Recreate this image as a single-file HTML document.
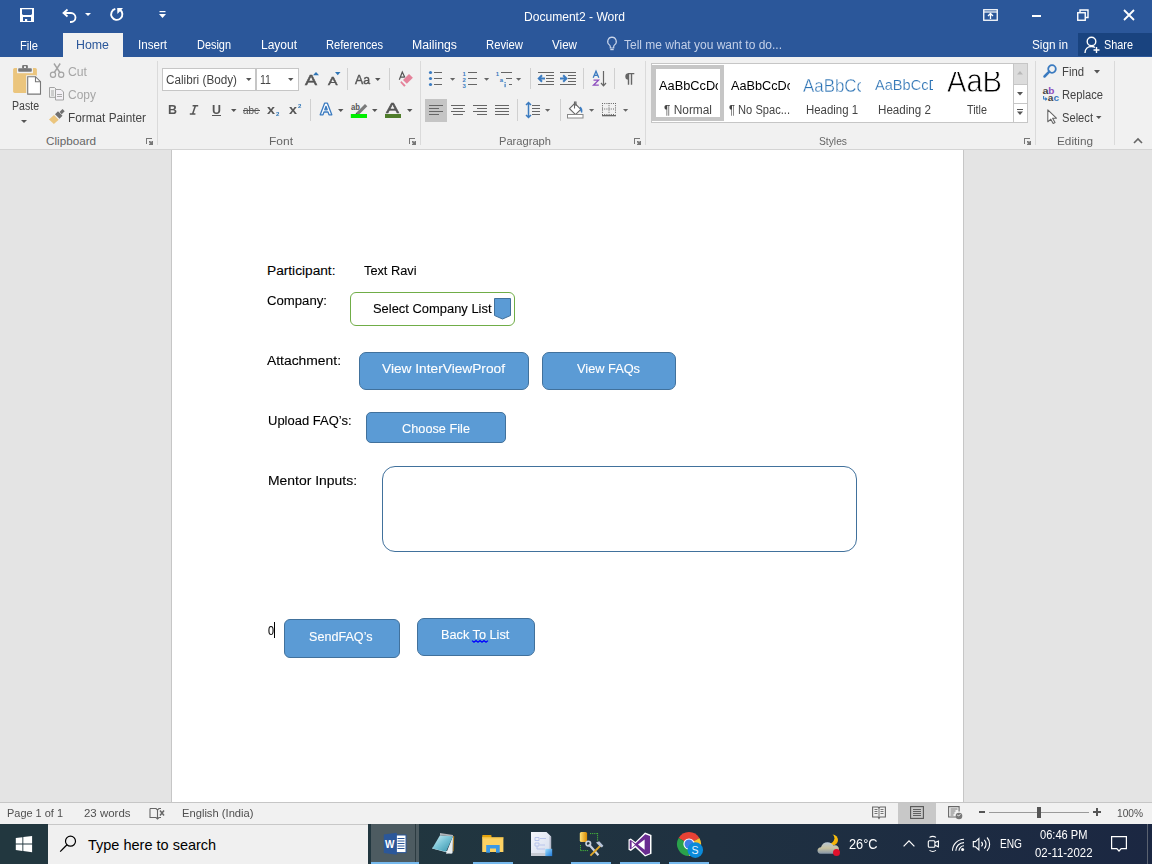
<!DOCTYPE html>
<html><head><meta charset="utf-8"><title>Document2 - Word</title>
<style>
html,body{margin:0;padding:0;width:1152px;height:864px;overflow:hidden;background:#e4e4e4;}
body{position:relative;font-family:"Liberation Sans",sans-serif;}
.t{position:absolute;white-space:nowrap;line-height:1;}
svg{overflow:visible;}
</style></head><body>
<div style="position:absolute;left:0px;top:0px;width:1152px;height:57px;background:#2b579a;"></div>
<div style="position:absolute;left:63px;top:33px;width:60px;height:24px;background:#f1f1f1;"></div>
<div style="position:absolute;left:1078px;top:33px;width:74px;height:23px;background:#19437f;"></div>
<svg style="position:absolute;left:0;top:0" width="1152" height="864"><path d="M20 8h14v14H20z M22 9.2v4.8l1 1h8l1-1V9.2z M23 17v4h2v-2h2.2v2H31v-4z" fill="#fff" fill-rule="evenodd"/></svg>
<svg style="position:absolute;left:61px;top:7px" width="18" height="16" viewBox="0 0 18 16"><path d="M3 6h7a4.5 4.5 0 0 1 0 9h-1" fill="none" stroke="#fff" stroke-width="1.8"/><path d="M6.5 2.5L2.5 6l4 3.5" fill="none" stroke="#fff" stroke-width="1.8"/></svg>
<svg style="position:absolute;left:85px;top:13px" width="7" height="4" viewBox="0 0 7 4"><path d="M0 0h6l-3 3z" fill="#fff"/></svg>
<svg style="position:absolute;left:0;top:0" width="1152" height="864"><path d="M115.3 8.9A5.6 5.6 0 1 0 119.8 9.6" fill="none" stroke="#fff" stroke-width="1.9"/><path d="M117.2 8h5.8l-2.2 2.4 -3.4 3.6z" fill="#fff"/></svg>
<svg style="position:absolute;left:159px;top:11px" width="7" height="8" viewBox="0 0 7 8"><rect x="0.5" y="0" width="6" height="1.2" fill="#fff"/><path d="M0 3h7l-3.5 4z" fill="#fff"/></svg>
<div class="t" style="left:524.00px;top:11.00px;font-size:12.6px;color:#fff;transform:scaleX(0.9578);transform-origin:0 0;">Document2 - Word</div>
<svg style="position:absolute;left:983px;top:9px" width="15" height="12" viewBox="0 0 15 12"><rect x="0.75" y="0.75" width="13.5" height="10.5" fill="none" stroke="#fff" stroke-width="1.3"/><path d="M1 3h13" stroke="#fff" stroke-width="1.2"/><path d="M7.5 10V5M5 7l2.5-2.5L10 7" fill="none" stroke="#fff" stroke-width="1.3"/></svg>
<div style="position:absolute;left:1032px;top:15px;width:9px;height:2px;background:#fff;"></div>
<svg style="position:absolute;left:1077px;top:9px" width="12" height="12" viewBox="0 0 12 12"><rect x="0.75" y="3.75" width="7.5" height="7.5" fill="none" stroke="#fff" stroke-width="1.4"/><path d="M3 3.5V1h8v7.5H8.5" fill="none" stroke="#fff" stroke-width="1.4"/></svg>
<svg style="position:absolute;left:1123px;top:9px" width="12" height="12" viewBox="0 0 12 12"><path d="M1 1l10 10M11 1L1 11" stroke="#fff" stroke-width="1.8"/></svg>
<div class="t" style="left:20.00px;top:40.00px;font-size:12.3px;color:#fff;transform:scaleX(0.9084);transform-origin:0 0;">File</div>
<div class="t" style="left:76.00px;top:39.00px;font-size:12.3px;color:#2b579a;transform:scaleX(1.0060);transform-origin:0 0;">Home</div>
<div class="t" style="left:138.00px;top:39.00px;font-size:12.3px;color:#fff;transform:scaleX(0.9430);transform-origin:0 0;">Insert</div>
<div class="t" style="left:197.00px;top:39.00px;font-size:12.3px;color:#fff;transform:scaleX(0.8882);transform-origin:0 0;">Design</div>
<div class="t" style="left:261.00px;top:39.00px;font-size:12.3px;color:#fff;transform:scaleX(0.9751);transform-origin:0 0;">Layout</div>
<div class="t" style="left:326.00px;top:39.00px;font-size:12.3px;color:#fff;transform:scaleX(0.9064);transform-origin:0 0;">References</div>
<div class="t" style="left:412.00px;top:39.00px;font-size:12.3px;color:#fff;transform:scaleX(0.9977);transform-origin:0 0;">Mailings</div>
<div class="t" style="left:486.00px;top:39.00px;font-size:12.3px;color:#fff;transform:scaleX(0.9177);transform-origin:0 0;">Review</div>
<div class="t" style="left:552.00px;top:39.00px;font-size:12.3px;color:#fff;transform:scaleX(0.9459);transform-origin:0 0;">View</div>
<svg style="position:absolute;left:606px;top:36px" width="12" height="16" viewBox="0 0 12 16"><path d="M6 1.2a4.3 4.3 0 0 0-2.6 7.7c.6.5.9 1.2.9 1.9V12h3.4v-1.2c0-.7.3-1.4.9-1.9A4.3 4.3 0 0 0 6 1.2z" fill="none" stroke="#c9d5ea" stroke-width="1.2"/><path d="M4.3 13.6h3.4" stroke="#c9d5ea" stroke-width="1.2"/></svg>
<div class="t" style="left:624.00px;top:39.00px;font-size:12.3px;color:#c3d0e8;transform:scaleX(0.9754);transform-origin:0 0;">Tell me what you want to do...</div>
<div class="t" style="left:1032.00px;top:39.00px;font-size:12.3px;color:#fff;transform:scaleX(0.9575);transform-origin:0 0;">Sign in</div>
<svg style="position:absolute;left:1084px;top:36px" width="17" height="18" viewBox="0 0 17 18"><circle cx="7.5" cy="5.5" r="4.3" fill="none" stroke="#fff" stroke-width="1.4"/><path d="M1 17c0-4 2.8-6.5 6.5-6.5 1.4 0 2.6.4 3.5 1" fill="none" stroke="#fff" stroke-width="1.4"/><path d="M12.5 11v6M9.5 14h6" stroke="#fff" stroke-width="1.4"/></svg>
<div class="t" style="left:1104.00px;top:39.00px;font-size:12.3px;color:#fff;transform:scaleX(0.8838);transform-origin:0 0;">Share</div>
<div style="position:absolute;left:0px;top:57px;width:1152px;height:92px;background:#f1f1f1;"></div>
<div style="position:absolute;left:0px;top:149px;width:1152px;height:1px;background:#d4d4d4;"></div>
<div style="position:absolute;left:157px;top:61px;width:1px;height:84px;background:#dadada;"></div>
<div style="position:absolute;left:420px;top:61px;width:1px;height:84px;background:#dadada;"></div>
<div style="position:absolute;left:645px;top:61px;width:1px;height:84px;background:#dadada;"></div>
<div style="position:absolute;left:1035px;top:61px;width:1px;height:84px;background:#dadada;"></div>
<div style="position:absolute;left:1114px;top:61px;width:1px;height:84px;background:#dadada;"></div>
<svg style="position:absolute;left:0;top:0" width="1152" height="864"><rect x="13.1" y="67.9" width="23.8" height="25" rx="1.6" fill="#ebc57d"/><rect x="17" y="67.5" width="16" height="5.7" fill="#f1f1f1"/><rect x="18.2" y="68.2" width="13.6" height="3.5" rx="0.8" fill="#777"/><rect x="22.1" y="65.1" width="5.8" height="3.6" rx="1" fill="#777"/><rect x="24" y="66.3" width="2" height="1.6" fill="#fff"/><path d="M27.7 76.7h7.8l5 5v12.4H27.7z" fill="#fff" stroke="#f1f1f1" stroke-width="3"/><path d="M27.7 76.7h7.8l5 5v12.4H27.7z" fill="#fff" stroke="#787878" stroke-width="1.1"/><path d="M35.5 76.7v5h5" fill="none" stroke="#787878" stroke-width="1.1"/></svg>
<div class="t" style="left:12.00px;top:100.00px;font-size:12.3px;color:#444444;transform:scaleX(0.8586);transform-origin:0 0;">Paste</div>
<svg style="position:absolute;left:21px;top:120px" width="7" height="4" viewBox="0 0 7 4"><path d="M0 0h6l-3 3z" fill="#555"/></svg>
<svg style="position:absolute;left:0;top:0" width="1152" height="864"><circle cx="53" cy="74.8" r="2.6" fill="none" stroke="#a3a3a3" stroke-width="1.2"/><circle cx="61.2" cy="74.8" r="2.6" fill="none" stroke="#a3a3a3" stroke-width="1.2"/><path d="M54.3 72.5L60.2 63.5M59.9 72.5L54 63.5" stroke="#a3a3a3" stroke-width="1.4"/></svg>
<div class="t" style="left:68.00px;top:66.00px;font-size:12.3px;color:#a6a6a6;transform:scaleX(0.9929);transform-origin:0 0;">Cut</div>
<svg style="position:absolute;left:0;top:0" width="1152" height="864"><path d="M49.5 87.5h5l1.5 1.5v8.3h-6.5z" fill="none" stroke="#a3a3a3" stroke-width="1"/><path d="M55.5 89.5h5.5l2.5 2.5v8H55.5z" fill="#f4f1f6" stroke="#a3a3a3" stroke-width="1"/><path d="M51 91h3M51 93h3M51 95h3M57 94.5h5M57 96.5h5" stroke="#a3a3a3" stroke-width="0.9"/></svg>
<div class="t" style="left:68.00px;top:89.00px;font-size:12.3px;color:#a6a6a6;transform:scaleX(0.9754);transform-origin:0 0;">Copy</div>
<svg style="position:absolute;left:0;top:0" width="1152" height="864"><path d="M49 119.5l5-4.5 4.7 4.7-4.8 4.3z" fill="#ebc57d"/><path d="M55 114.2l3-3 4.5 4.5-3 3z" fill="#707070"/><path d="M59.5 112l3-3 2.2 2.2-3 3z" fill="#707070"/></svg>
<div class="t" style="left:68.00px;top:112.00px;font-size:12.3px;color:#444444;transform:scaleX(0.9591);transform-origin:0 0;">Format Painter</div>
<div class="t" style="left:46.00px;top:135.00px;font-size:11.7px;color:#666666;">Clipboard</div>
<svg style="position:absolute;left:0;top:0" width="1152" height="864"><path d="M146 138h6v1h-5v5h-1z" fill="#777"/><path d="M149 141h1.2l1.3 1.3V141h1.5v4h-4v-1.3h1.3L149 142.3z" fill="#777"/></svg>
<div style="position:absolute;left:162px;top:68px;width:94px;height:23px;background:#fff;box-sizing:border-box;border:1px solid #c6c6c6"></div>
<div style="position:absolute;left:256px;top:68px;width:43px;height:23px;background:#fff;box-sizing:border-box;border:1px solid #c6c6c6"></div>
<div class="t" style="left:166.00px;top:74.00px;font-size:12.3px;color:#444444;transform:scaleX(0.9532);transform-origin:0 0;">Calibri (Body)</div>
<svg style="position:absolute;left:246px;top:78px" width="6" height="4" viewBox="0 0 6 4"><path d="M0 0h5.5l-2.75 3z" fill="#555"/></svg>
<div class="t" style="left:260.00px;top:74.00px;font-size:12.3px;color:#444444;transform:scaleX(0.8617);transform-origin:0 0;">11</div>
<svg style="position:absolute;left:288px;top:78px" width="6" height="4" viewBox="0 0 6 4"><path d="M0 0h5.5l-2.75 3z" fill="#555"/></svg>
<div class="t" style="left:305.00px;top:73.00px;font-size:14.5px;color:#555;transform:scaleX(1.2408);transform-origin:0 0;-webkit-text-stroke:0.5px #555;">A</div>
<svg style="position:absolute;left:313px;top:72px" width="6" height="4" viewBox="0 0 6 4"><path d="M0 3.2L3 0l3 3.2z" fill="#2e75b6"/></svg>
<div class="t" style="left:328.00px;top:76.00px;font-size:11.5px;color:#555;transform:scaleX(1.2385);transform-origin:0 0;-webkit-text-stroke:0.45px #555;">A</div>
<svg style="position:absolute;left:335px;top:72px" width="6" height="4" viewBox="0 0 6 4"><path d="M0 0h5.5L2.75 3.2z" fill="#2e75b6"/></svg>
<div style="position:absolute;left:347px;top:68px;width:1px;height:22px;background:#d0d0d0;"></div>
<div class="t" style="left:355.00px;top:73.00px;font-size:13.5px;color:#555;transform:scaleX(0.9084);transform-origin:0 0;-webkit-text-stroke:0.45px #555;">Aa</div>
<svg style="position:absolute;left:375px;top:78px" width="6" height="4" viewBox="0 0 6 4"><path d="M0 0h5.5l-2.75 3z" fill="#555"/></svg>
<div style="position:absolute;left:389px;top:68px;width:1px;height:22px;background:#d0d0d0;"></div>
<svg style="position:absolute;left:0;top:0" width="1152" height="864"><path d="M399.3 79.8l3-7.8 2.6 5.4M400.8 77.2h3.4" fill="none" stroke="#555" stroke-width="1.2"/><path d="M409 74l3.9 3.7-6.1 6.1-3.8-3.9z" fill="#e5829a"/><path d="M401.3 81l4.4 4.6-1.5 1.2-3.9-4.2z" fill="#e5829a"/></svg>
<div class="t" style="left:168.00px;top:104.00px;font-size:12.5px;color:#555;font-weight:700;transform:scaleX(0.9970);transform-origin:0 0;">B</div>
<svg style="position:absolute;left:0;top:0" width="1152" height="864"><path d="M192.6 105.7h5.6M189.8 113.9h5.6M195.4 105.7l-2.8 8.2" fill="none" stroke="#555" stroke-width="1.5"/></svg>
<div class="t" style="left:212.00px;top:104.00px;font-size:12.5px;color:#555;font-weight:700;transform:scaleX(0.9970);transform-origin:0 0;">U</div>
<div style="position:absolute;left:212px;top:115px;width:9px;height:1px;background:#555;"></div>
<svg style="position:absolute;left:231px;top:109px" width="6" height="4" viewBox="0 0 6 4"><path d="M0 0h5.5l-2.75 3z" fill="#555"/></svg>
<div class="t" style="left:243.00px;top:105.00px;font-size:11px;color:#555;transform:scaleX(0.9022);transform-origin:0 0;">abc</div>
<div style="position:absolute;left:243px;top:110px;width:17px;height:1px;background:#555;"></div>
<div class="t" style="left:267.00px;top:103.00px;font-size:13px;color:#555;font-weight:700;transform:scaleX(1.1065);transform-origin:0 0;">x</div>
<div class="t" style="left:275.80px;top:111.00px;font-size:6px;color:#2e75b6;font-weight:700;transform:scaleX(1.0189);transform-origin:0 0;">2</div>
<div class="t" style="left:289.00px;top:103.00px;font-size:13px;color:#555;font-weight:700;transform:scaleX(1.1065);transform-origin:0 0;">x</div>
<div class="t" style="left:298.00px;top:103.00px;font-size:6px;color:#2e75b6;font-weight:700;transform:scaleX(1.0189);transform-origin:0 0;">2</div>
<div style="position:absolute;left:310px;top:99px;width:1px;height:22px;background:#d0d0d0;"></div>
<svg style="position:absolute;left:319px;top:102px" width="14" height="14" viewBox="0 0 14 14"><path d="M1.2 12.8L5.6 1.2h2.8l4.4 11.6H10l-1-2.8H5l-1 2.8zM5.8 7.8h2.4L7 4.3z" fill="#fff" stroke="#3b7bc0" stroke-width="1.3" stroke-linejoin="round"/></svg>
<svg style="position:absolute;left:338px;top:109px" width="6" height="4" viewBox="0 0 6 4"><path d="M0 0h5.5l-2.75 3z" fill="#555"/></svg>
<svg style="position:absolute;left:0;top:0" width="1152" height="864"><text x="351" y="109.5" font-family="Liberation Sans" font-weight="700" font-size="9" fill="#555" textLength="9" lengthAdjust="spacingAndGlyphs">ab</text><path d="M356.5 112.5l8.5-8.5 2.3 2.3-8.5 8.5z" fill="#7a7a7a"/><path d="M355.6 113.4l1-1 2.3 2.3-2.2.6z" fill="#555"/><rect x="350.8" y="114" width="16.2" height="4" fill="#00ee00"/></svg>
<svg style="position:absolute;left:372px;top:109px" width="6" height="4" viewBox="0 0 6 4"><path d="M0 0h5.5l-2.75 3z" fill="#555"/></svg>
<div class="t" style="left:386.00px;top:101.00px;font-size:14px;color:#555;transform:scaleX(1.3922);transform-origin:0 0;-webkit-text-stroke:0.5px #555;">A</div>
<div style="position:absolute;left:385px;top:114px;width:16px;height:4px;background:#4f7d2b;"></div>
<svg style="position:absolute;left:407px;top:109px" width="6" height="4" viewBox="0 0 6 4"><path d="M0 0h5.5l-2.75 3z" fill="#555"/></svg>
<div class="t" style="left:269.00px;top:135.00px;font-size:11.7px;color:#666666;transform:scaleX(1.0262);transform-origin:0 0;">Font</div>
<svg style="position:absolute;left:0;top:0" width="1152" height="864"><path d="M409 138h6v1h-5v5h-1z" fill="#777"/><path d="M412 141h1.2l1.3 1.3V141h1.5v4h-4v-1.3h1.3L412 142.3z" fill="#777"/></svg>
<svg style="position:absolute;left:0;top:0" width="1152" height="864"><circle cx="430.5" cy="72.5" r="1.6" fill="#3b7bc0"/><rect x="434" y="72" width="8" height="1" fill="#666666"/><circle cx="430.5" cy="78.5" r="1.6" fill="#3b7bc0"/><rect x="434" y="78" width="8" height="1" fill="#666666"/><circle cx="430.5" cy="84.5" r="1.6" fill="#3b7bc0"/><rect x="434" y="84" width="8" height="1" fill="#666666"/><path d="M450 78h5.2l-2.6 2.8z" fill="#666"/><text x="462.6" y="75.5" font-family="Liberation Sans" font-weight="700" font-size="6" fill="#3b7bc0">1</text><rect x="468" y="72" width="9" height="1" fill="#666666"/><text x="462.6" y="81.5" font-family="Liberation Sans" font-weight="700" font-size="6" fill="#3b7bc0">2</text><rect x="468" y="78" width="9" height="1" fill="#666666"/><text x="462.6" y="87.5" font-family="Liberation Sans" font-weight="700" font-size="6" fill="#3b7bc0">3</text><rect x="468" y="84" width="9" height="1" fill="#666666"/><path d="M484 78h5.2l-2.6 2.8z" fill="#666"/><text x="495.8" y="75.5" font-family="Liberation Sans" font-weight="700" font-size="6" fill="#3b7bc0">1</text><rect x="501" y="72" width="11" height="1" fill="#666666"/><text x="499.8" y="81.5" font-family="Liberation Sans" font-weight="700" font-size="6" fill="#3b7bc0">a</text><rect x="506" y="78" width="6" height="1" fill="#666666"/><rect x="504.5" y="82" width="1.2" height="1" fill="#3b7bc0"/><rect x="504.5" y="83.8" width="1.2" height="3.4" fill="#3b7bc0"/><rect x="509" y="84" width="3" height="1" fill="#666666"/><path d="M516 78h5.2l-2.6 2.8z" fill="#666"/><rect x="538" y="72" width="16" height="1" fill="#666666"/><rect x="546" y="75" width="8" height="1" fill="#666666"/><rect x="546" y="78" width="8" height="1" fill="#666666"/><rect x="546" y="81" width="8" height="1" fill="#666666"/><rect x="538" y="84" width="16" height="1" fill="#666666"/><path d="M539 78.5h6M542 75.3l-3.2 3.2 3.2 3.2" fill="none" stroke="#3b7bc0" stroke-width="2"/><rect x="560" y="72" width="16" height="1" fill="#666666"/><rect x="568" y="75" width="8" height="1" fill="#666666"/><rect x="568" y="78" width="8" height="1" fill="#666666"/><rect x="568" y="81" width="8" height="1" fill="#666666"/><rect x="560" y="84" width="16" height="1" fill="#666666"/><path d="M560 78.5h6M563.2 75.3l3.2 3.2-3.2 3.2" fill="none" stroke="#3b7bc0" stroke-width="2"/><path d="M593.2 77.8l2.8-6.6 2.8 6.6M594.3 75.3h3.4" fill="none" stroke="#3b7bc0" stroke-width="1.3"/><path d="M593.5 80.2h5L593.5 85.2h5.3" fill="none" stroke="#8e4fbf" stroke-width="1.3"/><path d="M603.5 71v14.5M601 83l2.5 2.8 2.5-2.8" fill="none" stroke="#666" stroke-width="1.2"/><path d="M628.5 84.7V73.6h5.8M631.5 73.6v11.1" fill="none" stroke="#666" stroke-width="1.4"/><path d="M628.5 73.3a3.2 3.2 0 0 0 0 6.4z" fill="#666"/><rect x="425" y="99" width="22" height="23" fill="#c5c5c5"/><rect x="429" y="105" width="14" height="1" fill="#666666"/><rect x="451" y="105" width="14" height="1" fill="#666666"/><rect x="473" y="105" width="14" height="1" fill="#666666"/><rect x="495" y="105" width="14" height="1" fill="#666666"/><rect x="429" y="108" width="10" height="1" fill="#666666"/><rect x="453" y="108" width="10" height="1" fill="#666666"/><rect x="477" y="108" width="10" height="1" fill="#666666"/><rect x="495" y="108" width="14" height="1" fill="#666666"/><rect x="429" y="111" width="14" height="1" fill="#666666"/><rect x="451" y="111" width="14" height="1" fill="#666666"/><rect x="473" y="111" width="14" height="1" fill="#666666"/><rect x="495" y="111" width="14" height="1" fill="#666666"/><rect x="429" y="114" width="10" height="1" fill="#666666"/><rect x="453" y="114" width="10" height="1" fill="#666666"/><rect x="477" y="114" width="10" height="1" fill="#666666"/><rect x="495" y="114" width="14" height="1" fill="#666666"/><path d="M528.5 102.8v14.4M526 105l2.5-2.5 2.5 2.5M526 115l2.5 2.5 2.5-2.5" fill="none" stroke="#3b7bc0" stroke-width="1.5"/><rect x="532" y="105" width="8" height="1" fill="#666666"/><rect x="532" y="108" width="8" height="1" fill="#666666"/><rect x="532" y="111" width="8" height="1" fill="#666666"/><rect x="532" y="114" width="8" height="1" fill="#666666"/><path d="M545 109h5.2l-2.6 2.8z" fill="#666"/><path d="M569.5 108.7l5.3-5.3 6 6-5.3 5.2z" fill="#fff" stroke="#666" stroke-width="1.1"/><path d="M574.5 108.5v-6.5h1.5v4" fill="none" stroke="#666" stroke-width="1.1"/><path d="M580 106.5c2.2 1 3 3.3 2 6.8-1.5-1.5-2.5-3.5-2-6.8z" fill="#3b7bc0"/><rect x="567.5" y="114.5" width="15.5" height="3.5" fill="#fff" stroke="#888" stroke-width="1"/><path d="M589 109h5.2l-2.6 2.8z" fill="#666"/><path d="M602 103.5h13.5" stroke="#666" stroke-width="1" stroke-dasharray="1 1.2"/><path d="M602 109.0h13.5" stroke="#666" stroke-width="1" stroke-dasharray="1 1.2"/><path d="M602 114.5h13.5" stroke="#666" stroke-width="1" stroke-dasharray="1 1.2"/><path d="M602.5 103v11" stroke="#666" stroke-width="1" stroke-dasharray="1 1.2"/><path d="M609.0 103v11" stroke="#666" stroke-width="1" stroke-dasharray="1 1.2"/><path d="M615.5 103v11" stroke="#666" stroke-width="1" stroke-dasharray="1 1.2"/><rect x="602" y="115" width="14" height="1.3" fill="#666"/><path d="M623 109h5.2l-2.6 2.8z" fill="#666"/></svg>
<div style="position:absolute;left:530px;top:68px;width:1px;height:21px;background:#d0d0d0;"></div>
<div style="position:absolute;left:583px;top:68px;width:1px;height:21px;background:#d0d0d0;"></div>
<div style="position:absolute;left:614px;top:68px;width:1px;height:21px;background:#d0d0d0;"></div>
<div style="position:absolute;left:517px;top:99px;width:1px;height:22px;background:#d0d0d0;"></div>
<div style="position:absolute;left:560px;top:99px;width:1px;height:22px;background:#d0d0d0;"></div>
<div class="t" style="left:499.00px;top:135.00px;font-size:11.7px;color:#666666;transform:scaleX(0.9527);transform-origin:0 0;">Paragraph</div>
<svg style="position:absolute;left:0;top:0" width="1152" height="864"><path d="M634 138h6v1h-5v5h-1z" fill="#777"/><path d="M637 141h1.2l1.3 1.3V141h1.5v4h-4v-1.3h1.3L637 142.3z" fill="#777"/></svg>
<div style="position:absolute;left:651px;top:63px;width:377px;height:60px;background:#fff;box-sizing:border-box;border:1px solid #c6c6c6"></div>
<div style="position:absolute;left:652px;top:65px;width:72px;height:56px;background:#fff;box-sizing:border-box;border:4px solid #c6c6c6"></div>
<div style="position:absolute;left:1013px;top:64px;width:14px;height:20px;background:#dcdcdc;"></div>
<div style="position:absolute;left:1013px;top:84px;width:14px;height:1px;background:#c6c6c6;"></div>
<div style="position:absolute;left:1013px;top:103px;width:14px;height:1px;background:#c6c6c6;"></div>
<div style="position:absolute;left:1013px;top:64px;width:1px;height:58px;background:#c6c6c6;"></div>
<svg style="position:absolute;left:1017px;top:71px" width="7" height="4" viewBox="0 0 7 4"><path d="M0 3.5L3 0l3 3.5z" fill="#b8b8b8"/></svg>
<svg style="position:absolute;left:1017px;top:92px" width="7" height="4" viewBox="0 0 7 4"><path d="M0 0h6L3 3.5z" fill="#555"/></svg>
<svg style="position:absolute;left:1017px;top:109px" width="7" height="7" viewBox="0 0 7 7"><rect x="0" y="0" width="6" height="1" fill="#555"/><path d="M0 2.5h6L3 6z" fill="#555"/></svg>
<div style="position:absolute;left:659.00px;top:73.00px;width:58.50px;height:21.3px;overflow:hidden"><div class="t" style="left:0;top:6px;font-size:13.3px;color:#000;transform:scaleX(0.9611);transform-origin:0 0;">AaBbCcDc</div></div>
<div class="t" style="left:664.00px;top:104.00px;font-size:12.3px;color:#444444;transform:scaleX(0.9668);transform-origin:0 0;">¶ Normal</div>
<div style="position:absolute;left:731.00px;top:73.00px;width:58.50px;height:21.3px;overflow:hidden"><div class="t" style="left:0;top:6px;font-size:13.3px;color:#000;transform:scaleX(0.9534);transform-origin:0 0;">AaBbCcDc</div></div>
<div class="t" style="left:729.00px;top:104.00px;font-size:12.3px;color:#444444;transform:scaleX(0.9046);transform-origin:0 0;">¶ No Spac...</div>
<div style="position:absolute;left:803.00px;top:72.00px;width:58.00px;height:28.0px;overflow:hidden"><div class="t" style="left:0;top:6px;font-size:17.5px;color:#2e74b5;transform:scaleX(0.9658);transform-origin:0 0;-webkit-text-stroke:0.35px #fff;">AaBbCc</div></div>
<div class="t" style="left:806.00px;top:104.00px;font-size:12.3px;color:#444444;transform:scaleX(0.9275);transform-origin:0 0;">Heading 1</div>
<div style="position:absolute;left:875.00px;top:72.00px;width:58.00px;height:23.2px;overflow:hidden"><div class="t" style="left:0;top:6px;font-size:14.5px;color:#2e74b5;transform:scaleX(1.0053);transform-origin:0 0;-webkit-text-stroke:0.2px #fff;">AaBbCcD</div></div>
<div class="t" style="left:878.00px;top:104.00px;font-size:12.3px;color:#444444;transform:scaleX(0.9454);transform-origin:0 0;">Heading 2</div>
<div class="t" style="left:947.00px;top:64.00px;font-size:33px;color:#000;transform:scaleX(0.8818);transform-origin:0 0;-webkit-text-stroke:0.8px #fff;clip-path:inset(8px 0 0 0);">AaB</div>
<div class="t" style="left:967.00px;top:104.00px;font-size:12.3px;color:#444444;transform:scaleX(0.8782);transform-origin:0 0;">Title</div>
<div class="t" style="left:819.00px;top:135.00px;font-size:11.7px;color:#666666;transform:scaleX(0.8798);transform-origin:0 0;">Styles</div>
<svg style="position:absolute;left:0;top:0" width="1152" height="864"><path d="M1024 138h6v1h-5v5h-1z" fill="#777"/><path d="M1027 141h1.2l1.3 1.3V141h1.5v4h-4v-1.3h1.3L1027 142.3z" fill="#777"/></svg>
<svg style="position:absolute;left:1043px;top:64px" width="15" height="14" viewBox="0 0 15 14"><circle cx="9" cy="5" r="3.8" fill="none" stroke="#3b7bc0" stroke-width="1.8"/><path d="M6.3 7.7L1.5 12.5" stroke="#3b7bc0" stroke-width="2.5" stroke-linecap="round"/></svg>
<div class="t" style="left:1062.00px;top:66.00px;font-size:12.3px;color:#444444;transform:scaleX(0.9197);transform-origin:0 0;">Find</div>
<svg style="position:absolute;left:1094px;top:70px" width="7" height="4" viewBox="0 0 7 4"><path d="M0 0h6L3 3.5z" fill="#555"/></svg>
<svg style="position:absolute;left:0;top:0" width="1152" height="864"><text x="1042.6" y="93.8" font-family="Liberation Sans" font-weight="700" font-size="9.5" fill="#444" textLength="6" lengthAdjust="spacingAndGlyphs">a</text><text x="1048.3" y="93.8" font-family="Liberation Sans" font-weight="700" font-size="9.5" fill="#8e4fbf" textLength="6.2" lengthAdjust="spacingAndGlyphs">b</text><text x="1047.8" y="101.2" font-family="Liberation Sans" font-weight="700" font-size="9.5" fill="#444" textLength="5.6" lengthAdjust="spacingAndGlyphs">a</text><text x="1053.6" y="101.2" font-family="Liberation Sans" font-weight="700" font-size="9.5" fill="#3b7bc0" textLength="5.6" lengthAdjust="spacingAndGlyphs">c</text><path d="M1043.6 96v3h3M1045.3 97.7l1.5 1.3-1.5 1.3" fill="none" stroke="#3b7bc0" stroke-width="1.1"/></svg>
<div class="t" style="left:1062.00px;top:89.00px;font-size:12.3px;color:#444444;transform:scaleX(0.9088);transform-origin:0 0;">Replace</div>
<svg style="position:absolute;left:0;top:0" width="1152" height="864"><path d="M1047.8 109.8v12l3-2.6 2.4 4.2 1.8-1-2.4-4.2h3.8z" fill="#fff" stroke="#666" stroke-width="1.1" stroke-linejoin="round"/></svg>
<div class="t" style="left:1062.00px;top:112.00px;font-size:12.3px;color:#444444;transform:scaleX(0.9071);transform-origin:0 0;">Select</div>
<svg style="position:absolute;left:1096px;top:116px" width="6" height="4" viewBox="0 0 6 4"><path d="M0 0h5.5l-2.75 3z" fill="#555"/></svg>
<div class="t" style="left:1057.00px;top:135.00px;font-size:11.7px;color:#666666;transform:scaleX(1.0074);transform-origin:0 0;">Editing</div>
<svg style="position:absolute;left:1133px;top:138px" width="10" height="6" viewBox="0 0 10 6"><path d="M1 5l4-4 4 4" fill="none" stroke="#666" stroke-width="1.6"/></svg>
<div style="position:absolute;left:0px;top:150px;width:1152px;height:652px;background:#e4e4e4;"></div>
<div style="position:absolute;left:171px;top:150px;width:1px;height:652px;background:#c6c6c6;"></div>
<div style="position:absolute;left:963px;top:150px;width:1px;height:652px;background:#c6c6c6;"></div>
<div style="position:absolute;left:172px;top:150px;width:791px;height:652px;background:#ffffff;"></div>
<div class="t" style="left:267.00px;top:264.00px;font-size:13.7px;color:#000000;-webkit-text-stroke:0.12px currentColor;">Participant:</div>
<div class="t" style="left:364.00px;top:264.00px;font-size:13.7px;color:#000000;transform:scaleX(0.9327);transform-origin:0 0;-webkit-text-stroke:0.12px currentColor;">Text Ravi</div>
<div class="t" style="left:267.00px;top:294.00px;font-size:13.7px;color:#000000;transform:scaleX(0.9618);transform-origin:0 0;-webkit-text-stroke:0.12px currentColor;">Company:</div>
<div style="position:absolute;left:350px;top:292px;width:165px;height:34px;background:#fff;box-sizing:border-box;border:1.3px solid #70ad47;border-radius:6px"></div>
<div class="t" style="left:373.00px;top:302.00px;font-size:13.7px;color:#000000;transform:scaleX(0.9440);transform-origin:0 0;-webkit-text-stroke:0.12px currentColor;">Select Company List</div>
<svg style="position:absolute;left:493px;top:297px" width="19" height="23" viewBox="0 0 19 23"><path d="M1.5 1.5h16v17l-8 3.5-8-3.5z" fill="#5b9bd5" stroke="#41719c" stroke-width="1"/></svg>
<div class="t" style="left:267.00px;top:354.00px;font-size:13.7px;color:#000000;transform:scaleX(1.0132);transform-origin:0 0;-webkit-text-stroke:0.12px currentColor;">Attachment:</div>
<div style="position:absolute;left:359px;top:352px;width:170px;height:38px;background:#5b9bd5;box-sizing:border-box;border:1px solid #41719c;background:#5b9bd5;border-radius:7px"></div>
<div class="t" style="left:382.00px;top:362.00px;font-size:13.7px;color:#fff;transform:scaleX(1.0021);transform-origin:0 0;-webkit-text-stroke:0.12px currentColor;">View InterViewProof</div>
<div style="position:absolute;left:542px;top:352px;width:134px;height:38px;background:#5b9bd5;box-sizing:border-box;border:1px solid #41719c;background:#5b9bd5;border-radius:7px"></div>
<div class="t" style="left:577.00px;top:362.00px;font-size:13.7px;color:#fff;transform:scaleX(0.9341);transform-origin:0 0;-webkit-text-stroke:0.12px currentColor;">View FAQs</div>
<div class="t" style="left:268.00px;top:414.00px;font-size:13.7px;color:#000000;transform:scaleX(0.9489);transform-origin:0 0;-webkit-text-stroke:0.12px currentColor;">Upload FAQ’s:</div>
<div style="position:absolute;left:366px;top:412px;width:140px;height:31px;background:#5b9bd5;box-sizing:border-box;border:1px solid #41719c;background:#5b9bd5;border-radius:5px"></div>
<div class="t" style="left:402.00px;top:422.00px;font-size:13.7px;color:#fff;transform:scaleX(0.9311);transform-origin:0 0;-webkit-text-stroke:0.12px currentColor;">Choose File</div>
<div class="t" style="left:268.00px;top:474.00px;font-size:13.7px;color:#000000;transform:scaleX(1.0172);transform-origin:0 0;-webkit-text-stroke:0.12px currentColor;">Mentor Inputs:</div>
<div style="position:absolute;left:382px;top:466px;width:475px;height:86px;background:#fff;box-sizing:border-box;border:1.2px solid #41719c;border-radius:13px"></div>
<div class="t" style="left:267.50px;top:624.00px;font-size:13.7px;color:#000000;transform:scaleX(0.7882);transform-origin:0 0;-webkit-text-stroke:0.12px currentColor;">0</div>
<div style="position:absolute;left:274px;top:622px;width:1px;height:16px;background:#000;"></div>
<div style="position:absolute;left:284px;top:619px;width:116px;height:39px;background:#5b9bd5;box-sizing:border-box;border:1px solid #41719c;background:#5b9bd5;border-radius:6px"></div>
<div class="t" style="left:309.00px;top:630.00px;font-size:13.7px;color:#fff;transform:scaleX(0.9205);transform-origin:0 0;-webkit-text-stroke:0.12px currentColor;">SendFAQ’s</div>
<div style="position:absolute;left:417px;top:618px;width:118px;height:38px;background:#5b9bd5;box-sizing:border-box;border:1px solid #41719c;background:#5b9bd5;border-radius:7px"></div>
<div class="t" style="left:440.50px;top:628.00px;font-size:13.7px;color:#fff;transform:scaleX(0.9283);transform-origin:0 0;-webkit-text-stroke:0.12px currentColor;">Back To List</div>
<svg style="position:absolute;left:0;top:0" width="1152" height="864"><polyline points="472 640.6 474 642.3 476 640.6 478 642.3 480 640.6 482 642.3 484 640.6 486 642.3 488 640.6" fill="none" stroke="#0000ff" stroke-width="1.2"/></svg>
<div style="position:absolute;left:0px;top:802px;width:1152px;height:1px;background:#c6c6c6;"></div>
<div style="position:absolute;left:0px;top:803px;width:1152px;height:21px;background:#f1f1f1;"></div>
<div class="t" style="left:7.00px;top:807.00px;font-size:11.7px;color:#505050;transform:scaleX(0.9367);transform-origin:0 0;">Page 1 of 1</div>
<div class="t" style="left:83.50px;top:807.00px;font-size:11.7px;color:#505050;transform:scaleX(0.9805);transform-origin:0 0;">23 words</div>
<svg style="position:absolute;left:149px;top:807px" width="17" height="13" viewBox="0 0 17 13"><path d="M1 1.5h6l1.5 1.5L10 1.5h2M1 1.5v9h6l1.5 1.5L10 10.5h2M8.5 3v9" fill="none" stroke="#666" stroke-width="1.1"/><path d="M11 3.5l4 5M15 3.5l-4 5" stroke="#666" stroke-width="1.5"/></svg>
<div class="t" style="left:182.00px;top:807.00px;font-size:11.7px;color:#505050;transform:scaleX(0.9571);transform-origin:0 0;">English (India)</div>
<svg style="position:absolute;left:872px;top:806px" width="14" height="13" viewBox="0 0 14 13"><path d="M0.6 1h5.4l1 1 1-1h5.4v10h-5.4l-1 1.5-1-1.5H0.6z" fill="none" stroke="#666" stroke-width="1.1"/><path d="M7 2v10M2.5 3.5h3M2.5 5.5h3M2.5 7.5h3M8.5 3.5h3M8.5 5.5h3M8.5 7.5h3" stroke="#666" stroke-width="0.9"/></svg>
<div style="position:absolute;left:898px;top:803px;width:38px;height:21px;background:#c8c8c8;"></div>
<svg style="position:absolute;left:910px;top:806px" width="14" height="13" viewBox="0 0 14 13"><rect x="0.6" y="0.6" width="12.8" height="11.8" fill="none" stroke="#555" stroke-width="1.1"/><path d="M3 3.5h8M3 5.5h8M3 7.5h8M3 9.5h8" stroke="#555" stroke-width="0.9"/></svg>
<svg style="position:absolute;left:948px;top:806px" width="15" height="14" viewBox="0 0 15 14"><path d="M9 11H0.6V0.6h10.5v5" fill="none" stroke="#666" stroke-width="1.1"/><path d="M2.5 3h7M2.5 5h5M2.5 7h4M2.5 9h3" stroke="#666" stroke-width="0.9"/><circle cx="11" cy="10" r="3.3" fill="#777"/><path d="M9 9l2 1 1.5-2" stroke="#eee" stroke-width="0.8" fill="none"/></svg>
<div style="position:absolute;left:979px;top:811px;width:6px;height:2px;background:#555;"></div>
<div style="position:absolute;left:989px;top:812px;width:100px;height:1px;background:#9a9a9a;"></div>
<div style="position:absolute;left:1037px;top:807px;width:4px;height:11px;background:#555;"></div>
<div style="position:absolute;left:1093px;top:811px;width:8px;height:2px;background:#555;"></div>
<div style="position:absolute;left:1096px;top:808px;width:2px;height:8px;background:#555;"></div>
<div class="t" style="left:1116.50px;top:807.00px;font-size:11.7px;color:#505050;transform:scaleX(0.8698);transform-origin:0 0;">100%</div>
<div style="position:absolute;left:0;top:824px;width:1152px;height:40px;background:linear-gradient(90deg,#233a40 0%,#21363f 35%,#1f3141 62%,#1b2742 100%)"></div>
<div style="position:absolute;left:0px;top:824px;width:48px;height:40px;background:#22373f;"></div>
<svg style="position:absolute;left:0;top:0" width="1152" height="864"><path d="M15.8 838.1l6.6-.9v6.4h-6.6zM23.3 837.1l8.8-1.2v7.7h-8.8zM15.8 844.6h6.6v6.4l-6.6-.9zM23.3 844.6h8.8v7.7l-8.8-1.2z" fill="#fff"/></svg>
<div style="position:absolute;left:48px;top:824px;width:320px;height:40px;background:#f0f0f0;box-sizing:border-box;border-top:1px solid #c8c8c8"></div>
<svg style="position:absolute;left:0;top:0" width="1152" height="864"><circle cx="70.5" cy="841.2" r="5" fill="none" stroke="#000" stroke-width="1.2"/><path d="M67 844.8L60.2 851.6" stroke="#000" stroke-width="1.3"/></svg>
<div class="t" style="left:88.00px;top:838.00px;font-size:14.5px;color:#000;">Type here to search</div>
<div style="position:absolute;left:371px;top:824px;width:48px;height:40px;background:#4d5b61;"></div>
<div style="position:absolute;left:415px;top:824px;width:1px;height:38px;background:#2c3b41;"></div>
<div style="position:absolute;left:371px;top:862px;width:48px;height:2px;background:#76b9ed;"></div>
<svg style="position:absolute;left:0;top:0" width="1152" height="864"><rect x="396" y="835" width="10" height="17.6" fill="#fff" stroke="#2b579a" stroke-width="1"/><path d="M397.5 838.5h7M397.5 841h7M397.5 843.5h7M397.5 846h7M397.5 848.5h7" stroke="#2b579a" stroke-width="1.1"/><path d="M383.8 834.6l13-1.9v22.1l-13-1.9z" fill="#2b579a"/><text x="385" y="848" font-family="Liberation Sans" font-weight="700" font-size="10" fill="#fff">W</text></svg>
<svg style="position:absolute;left:0;top:0" width="1152" height="864"><defs><linearGradient id="npg" x1="0" y1="0" x2="1" y2="1"><stop offset="0" stop-color="#d8f0f6"/><stop offset="0.45" stop-color="#7cc6d8"/><stop offset="1" stop-color="#2f8ea8"/></linearGradient></defs><path d="M453 836l1.2.3-.6 15-1.1.2z" fill="#b8842a"/><path d="M453 836l-.5 17.2-6.5.6 7-17.8z" fill="#e8eef2"/><path d="M432.2 848.5l19.5 5.2-.2-1.5-19-4.6z" fill="#e8eef2"/><path d="M440 835.2l13 1-7 15.6-13.8-3.4z" fill="url(#npg)"/><path d="M440 833l13 2v1.6l-13-1.4z" fill="#b0b4b8"/></svg>
<div style="position:absolute;left:473px;top:862px;width:40px;height:2px;background:#76b9ed;"></div>
<svg style="position:absolute;left:0;top:0" width="1152" height="864"><rect x="482.2" y="834.9" width="9.3" height="3.5" rx="0.8" fill="#e3a20e"/><rect x="482.2" y="837.4" width="21.2" height="14.6" fill="#fdd263"/><rect x="482.2" y="837.4" width="21.2" height="1" fill="#f6c445"/><path d="M486.2 845.1h13.5v7.7h-3.7v-4.4h-6v4.4h-3.8z" fill="#3b99e6"/></svg>
<svg style="position:absolute;left:0;top:0" width="1152" height="864"><defs><linearGradient id="fpg" x1="0" y1="0" x2="1" y2="1"><stop offset="0" stop-color="#f4f6fc"/><stop offset="1" stop-color="#d4dcec"/></linearGradient><linearGradient id="bsq" x1="0" y1="0" x2="1" y2="1"><stop offset="0" stop-color="#9ee0ff"/><stop offset="1" stop-color="#1e78d8"/></linearGradient></defs><path d="M531 832h15.5l4.6 4.6V856H531z" fill="url(#fpg)"/><path d="M549.5 836v20h1.6V836.6z" fill="#b8bccc"/><rect x="531" y="853" width="20" height="3" fill="#c8ccd4"/><path d="M535 837.5h4v3h-4zM535 843h4v3h-4zM540 838.5h6M540 845h5M537 846v3M537 849h8" fill="none" stroke="#b8c4ec" stroke-width="1"/><rect x="545.3" y="848.8" width="6.9" height="7.3" fill="url(#bsq)"/></svg>
<div style="position:absolute;left:571px;top:862px;width:40px;height:2px;background:#76b9ed;"></div>
<svg style="position:absolute;left:0;top:0" width="1152" height="864"><defs><linearGradient id="cyl" x1="0" y1="0" x2="1" y2="0"><stop offset="0" stop-color="#ffe27a"/><stop offset="1" stop-color="#d88a00"/></linearGradient></defs><rect x="579.8" y="832" width="7.3" height="10" rx="1.5" fill="url(#cyl)"/><path d="M590 833.6h8M597.6 833v8.5M580.5 845v5.6M580.5 850.6h8" fill="none" stroke="#46b83a" stroke-width="1" stroke-dasharray="1.2 0.9"/><path d="M588.8 844.2l9.6 11" stroke="#c8d0dc" stroke-width="2.2"/><circle cx="588.3" cy="843.6" r="2.3" fill="none" stroke="#c8d0dc" stroke-width="1.6"/><path d="M600.6 845.5l-10.2 10.2" stroke="#e0a828" stroke-width="1.8"/><path d="M596 842.5l3.2-1.2 4.2 4.5-1.5 1.8-2.5-1.6z" fill="#b8c4d8"/></svg>
<div style="position:absolute;left:620px;top:862px;width:40px;height:2px;background:#76b9ed;"></div>
<svg style="position:absolute;left:0;top:0" width="1152" height="864"><path d="M645 832.5l6.5 2.6v18.6L645 856.5l-9.6-9.1-4.6 3.5-2.3-1.1V839.6l2.3-1.1 4.6 3.5z" fill="#fff"/><path d="M645.3 834.3l4.7 1.8v17.1l-4.7 1.9-9.8-9.5-4.8 3.6-1-0.5V840.5l1-.5 4.8 3.6z" fill="#6a2c91"/><path d="M644.6 839.5v10.2l-6.6-5.1z" fill="#fff"/><path d="M631.6 841.5v6.4l3.5-3.2z" fill="#fff"/></svg>
<div style="position:absolute;left:669px;top:862px;width:40px;height:2px;background:#76b9ed;"></div>
<svg style="position:absolute;left:0;top:0" width="1152" height="864"><path d="M689 844L678.6 838A12 12 0 0 1 699.4 838z" fill="#e94235"/><path d="M689 844L699.4 838A12 12 0 0 1 689 856z" fill="#fbc02d"/><path d="M689 844L689 856A12 12 0 0 1 678.6 838z" fill="#2aa14b"/><circle cx="689" cy="844" r="5.6" fill="#fff"/><circle cx="689" cy="844" r="4.5" fill="#3f7ee8"/><circle cx="695.3" cy="850.1" r="7.8" fill="#0b8ad9"/><text x="691.6" y="854.3" font-family="Liberation Sans" font-size="10.5" fill="#e8f4ff">S</text></svg>
<svg style="position:absolute;left:812px;top:828px" width="30" height="30" viewBox="0 0 30 30"><defs><linearGradient id="mg" x1="0" y1="0" x2="1" y2="1"><stop offset="0" stop-color="#ffd21a"/><stop offset="1" stop-color="#f0a800"/></linearGradient><linearGradient id="cg" x1="0" y1="0" x2="0" y2="1"><stop offset="0" stop-color="#b8c8d8"/><stop offset="0.5" stop-color="#c9c3a0"/><stop offset="1" stop-color="#8595a8"/></linearGradient></defs><mask id="mmk"><rect x="0" y="0" width="30" height="30" fill="#fff"/><circle cx="17.2" cy="10.2" r="5.2" fill="#000"/></mask><circle cx="20.6" cy="12" r="5.4" fill="url(#mg)" mask="url(#mmk)"/><path d="M8.5 25.8C6.5 25.8 5.5 24.3 5.5 22.6C5.5 20.6 7 19.3 9 19.2C9.8 16.3 12.3 14.3 15.5 14.3C18.2 14.3 20.3 15.6 21.3 17.6C22 17.3 22.7 17.2 23.3 17.2C25.4 17.2 27 19 27 21.4C27 23.8 25.5 25.8 23.2 25.8Z" fill="url(#cg)"/><circle cx="24.5" cy="24.6" r="3.5" fill="#e0102c"/></svg>
<div class="t" style="left:848.50px;top:837.00px;font-size:14.3px;color:#fff;transform:scaleX(0.8922);transform-origin:0 0;">26°C</div>
<svg style="position:absolute;left:0;top:0" width="1152" height="864"><path d="M903.6 846.4l5.4-5.6 5.4 5.6" fill="none" stroke="#fff" stroke-width="1.2"/></svg>
<svg style="position:absolute;left:0;top:0" width="1152" height="864"><path d="M929.5 837.4a6 6 0 0 1 6.5 0M929.5 850.4a6 6 0 0 0 6.5 0" fill="none" stroke="#fff" stroke-width="1.1"/><rect x="928.3" y="840.8" width="6.6" height="6.4" rx="1" fill="none" stroke="#fff" stroke-width="1.1"/><path d="M935 842.6l3.4-1.6v5.8l-3.4-1.6" fill="none" stroke="#fff" stroke-width="1.1"/></svg>
<svg style="position:absolute;left:0;top:0" width="1152" height="864"><path d="M952.5 850.8a11.5 11.5 0 0 1 11.5-11.5M955.8 850.8a8.2 8.2 0 0 1 8.2-8.2M959 850.8a5 5 0 0 1 5-5" fill="none" stroke="#fff" stroke-width="1.1"/><circle cx="962.6" cy="849.6" r="1.5" fill="#fff"/></svg>
<svg style="position:absolute;left:0;top:0" width="1152" height="864"><path d="M973.3 841.6h2.2l3.4-3.2v11.6l-3.4-3.2h-2.2z" fill="none" stroke="#fff" stroke-width="1.1"/><path d="M981.5 841.8a3.5 3.5 0 0 1 0 4.6M984.3 839.8a6.5 6.5 0 0 1 0 8.8M987 837.5a9.8 9.8 0 0 1 0 13.4" fill="none" stroke="#fff" stroke-width="1.1"/></svg>
<div class="t" style="left:999.50px;top:838.00px;font-size:12px;color:#fff;transform:scaleX(0.8460);transform-origin:0 0;">ENG</div>
<div class="t" style="left:1040.00px;top:829.00px;font-size:12px;color:#fff;transform:scaleX(0.9248);transform-origin:0 0;">06:46 PM</div>
<div class="t" style="left:1035.00px;top:847.00px;font-size:12px;color:#fff;transform:scaleX(0.9505);transform-origin:0 0;">02-11-2022</div>
<svg style="position:absolute;left:0;top:0" width="1152" height="864"><path d="M1111.6 836.6h14.8v12h-5.2l-2.2 2.4-2.2-2.4h-5.2z" fill="none" stroke="#fff" stroke-width="1.2"/></svg>
<div style="position:absolute;left:1147px;top:824px;width:1px;height:40px;background:#5a6270;"></div>
</body></html>
